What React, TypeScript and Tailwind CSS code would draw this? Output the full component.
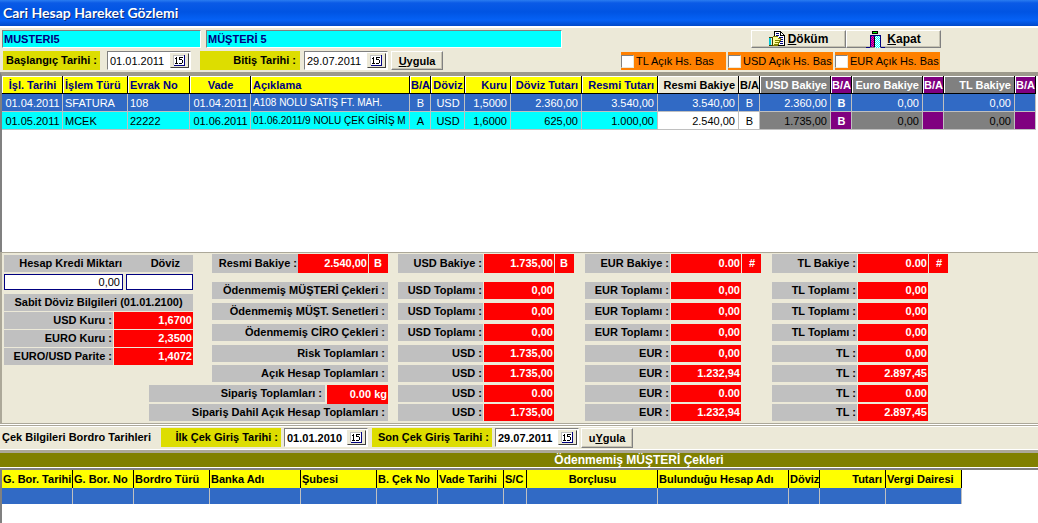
import { useState } from "react";
import clsx from "clsx";

type Align = "left" | "center" | "right";

interface Column {
  title: string;
  width: number;
  align: Align;
  head?: string;
  cell?: string;
}

const YELLOW = "bg-[#ffff00] text-[#000080]";
const PLAIN = "bg-[#ece9d8] text-black";
const GRAY = "bg-[#808080] text-white";
const PURPLE = "bg-[#800080] text-white";

const movementColumns: Column[] = [
  { title: "İşl. Tarihi", width: 61, align: "center", head: YELLOW },
  { title: "İşlem Türü", width: 65, align: "left", head: YELLOW },
  { title: "Evrak No", width: 62, align: "left", head: YELLOW },
  { title: "Vade", width: 61, align: "center", head: YELLOW },
  { title: "Açıklama", width: 159, align: "left", head: YELLOW, cell: "text-[10px]" },
  { title: "B/A", width: 21, align: "center", head: YELLOW },
  { title: "Döviz", width: 34, align: "center", head: YELLOW },
  { title: "Kuru", width: 46, align: "right", head: YELLOW },
  { title: "Döviz Tutarı", width: 71, align: "right", head: YELLOW },
  { title: "Resmi Tutarı", width: 76, align: "right", head: YELLOW },
  { title: "Resmi Bakiye", width: 81, align: "right", head: PLAIN, cell: "bg-white" },
  { title: "B/A", width: 21, align: "center", head: PLAIN, cell: "bg-white" },
  { title: "USD Bakiye", width: 71, align: "right", head: GRAY, cell: "bg-[#808080]" },
  { title: "B/A", width: 21, align: "center", head: PURPLE, cell: "bg-[#800080] text-white font-bold" },
  { title: "Euro Bakiye", width: 71, align: "right", head: GRAY, cell: "bg-[#808080]" },
  { title: "B/A", width: 21, align: "center", head: PURPLE, cell: "bg-[#800080] text-white font-bold" },
  { title: "TL Bakiye", width: 71, align: "right", head: GRAY, cell: "bg-[#808080]" },
  { title: "B/A", width: 21, align: "center", head: PURPLE, cell: "bg-[#800080] text-white font-bold" },
];

const movements = [
  ["01.04.2011", "SFATURA", "108", "01.04.2011", "A108 NOLU SATIŞ FT. MAH.", "B", "USD", "1,5000", "2.360,00", "3.540,00", "3.540,00", "B", "2.360,00", "B", "0,00", "", "0,00", ""],
  ["01.05.2011", "MCEK", "22222", "01.06.2011", "01.06.2011/9 NOLU ÇEK GİRİŞ M", "A", "USD", "1,6000", "625,00", "1.000,00", "2.540,00", "B", "1.735,00", "B", "0,00", "", "0,00", ""],
];

const chequeColumns: Column[] = [
  { title: "G. Bor. Tarihi", width: 71, align: "left" },
  { title: "G. Bor. No", width: 61, align: "left" },
  { title: "Bordro Türü", width: 76, align: "left" },
  { title: "Banka Adı", width: 91, align: "left" },
  { title: "Şubesi", width: 76, align: "left" },
  { title: "B. Çek No", width: 61, align: "left" },
  { title: "Vade Tarihi", width: 66, align: "left" },
  { title: "S/C", width: 23, align: "left" },
  { title: "Borçlusu", width: 131, align: "center" },
  { title: "Bulunduğu Hesap Adı", width: 131, align: "left" },
  { title: "Döviz", width: 31, align: "left" },
  { title: "Tutarı", width: 66, align: "right" },
  { title: "Vergi Dairesi", width: 76, align: "left" },
];

const totals = [
  { label: "Ödenmemiş MÜŞTERİ Çekleri :", suffix: " Toplamı :", values: ["0,00", "0,00", "0,00"] },
  { label: "Ödenmemiş MÜŞT. Senetleri :", suffix: " Toplamı :", values: ["0,00", "0,00", "0,00"] },
  { label: "Ödenmemiş CİRO Çekleri :", suffix: " Toplamı :", values: ["0,00", "0,00", "0,00"] },
  { label: "Risk Toplamları :", suffix: " :", values: ["1.735,00", "0,00", "0,00"] },
  { label: "Açık Hesap Toplamları :", suffix: " :", values: ["1.735,00", "1.232,94", "2.897,45"] },
];

const currencies = ["USD", "EUR", "TL"];

const alignClass: Record<Align, string> = {
  left: "text-left",
  center: "text-center",
  right: "text-right",
};

const sunken = "border border-t-[#808080] border-l-[#808080] border-r-white border-b-white";
const raised =
  "border border-t-white border-l-white border-r-[#808080] border-b-[#808080] bg-[#ece9d8] shadow-[inset_-1px_-1px_0_#c5c2b2]";

function DateField({ id, value, bold }: { id: string; value: string; bold?: boolean }) {
  const [date, setDate] = useState(value);
  return (
    <div className={clsx("flex h-[19px] w-[84px] items-center bg-white", sunken)}>
      <input
        id={id}
        value={date}
        onChange={(e) => setDate(e.target.value)}
        className={clsx("h-full w-[62px] pl-[2px] outline-none", bold && "font-bold")}
      />
      <button
        type="button"
        aria-label="Takvim"
        className="flex h-[15px] w-[19px] items-center justify-center border border-t-[#ece9d8] border-l-[#ece9d8] border-r-[#404040] border-b-[#404040] bg-[#ece9d8]"
      >
        <svg viewBox="0 0 13 11" className="h-[11px] w-[13px]" shapeRendering="crispEdges">
          <path d="M0 0h11v10H0z" fill="#fff" />
          <path d="M0 0h11v1H0zM0 0h1v10H0z" fill="#c0c0c0" />
          <path d="M11 0h1v11h-1zM1 10h10v1H1z" fill="#000080" />
          <path d="M3 2h1v6H3zM2 3h1v1H2zM2 8h3v1H2z" fill="#000" />
          <path d="M6 2h4v1H6zM6 3h1v2H6zM6 4h3v1H6zM9 5h1v3H9zM6 8h3v1H6z" fill="#000" />
        </svg>
      </button>
    </div>
  );
}

function PrintIcon() {
  return (
    <svg viewBox="0 0 17 16" className="h-4 w-[17px]" shapeRendering="crispEdges">
      <path d="M6 1h6l4 4v9H6z" fill="#fff" />
      <path d="M5.5 5V.5h6l4 4v10H7M11.5 .5v4h4" fill="none" stroke="#000" />
      <path d="M7 2.5h3M7 4.5h3M10 6.5h4M12 8.5h2M11 10.5h3M11 12.5h3" fill="none" stroke="#000080" />
      <path d="M3 6h6v2h2v2h-1v2H9v2H4v-1H3z" fill="#ffff99" />
      <path d="M4 5.5h5M9 7.500h2.500v2H6M10 9.500v2H6M9 11.500v2H5M4 14.500h5" fill="none" stroke="#808000" />
      <path d="M0 7h2v7H0z" fill="#00c8d8" />
      <path d="M0 6.500h3v8H0" fill="none" stroke="#404000" />
    </svg>
  );
}

function ExitIcon() {
  return (
    <svg viewBox="0 0 19 17" className="h-[17px] w-[19px]" shapeRendering="crispEdges">
      <defs>
        <pattern id="magentaDither" width="2" height="2" patternUnits="userSpaceOnUse">
          <rect width="2" height="2" fill="#ff00c0" />
          <path d="M0 0h1v1H0zM1 1h1v1H1z" fill="#800080" />
        </pattern>
        <pattern id="cyanDither" width="2" height="2" patternUnits="userSpaceOnUse">
          <rect width="2" height="2" fill="#fff" />
          <path d="M0 0h1v1H0zM1 1h1v1H1z" fill="#00ffff" />
        </pattern>
      </defs>
      <path d="M6 0h6v3H6z" fill="#000" />
      <path d="M7 1h4v1H7z" fill="#00ff00" />
      <path d="M4 4h11v13h4v-1H0v1h4z" fill="#000080" />
      <path d="M5 5h3v11H5z" fill="url(#magentaDither)" />
      <path d="M8 6h1v10H8z" fill="#000" />
      <path d="M9 5h5v12H9z" fill="url(#cyanDither)" />
    </svg>
  );
}

function PrintOption({ label }: { label: string }) {
  return (
    <label className="flex h-[18px] w-[105px] items-center gap-[2px] bg-[#ff8000] whitespace-nowrap">
      <input
        type="checkbox"
        className="size-[13px] shrink-0 appearance-none border border-t-[#808080] border-l-[#808080] border-r-[#ece9d8] border-b-[#ece9d8] bg-white checked:bg-[#000080]"
      />
      {label}
    </label>
  );
}

function GrayLabel({ children, className }: { children: React.ReactNode; className?: string }) {
  return <div className={clsx("shrink-0 bg-[#c0c0c0] text-right whitespace-nowrap", className)}>{children}</div>;
}

function RedValue({ children, className }: { children: React.ReactNode; className?: string }) {
  return <div className={clsx("shrink-0 bg-[#ff0000] text-right whitespace-nowrap text-white", className)}>{children}</div>;
}

function CurrencyCells({ suffix, values, flags }: { suffix: string; values: string[]; flags?: string[] }) {
  return (
    <>
      {currencies.map((cur, i) => (
        <div key={cur} className={clsx("flex w-[177px] shrink-0", flags ? "h-[19px] leading-[19px]" : "h-[17px] leading-[17px]")}>
          <GrayLabel className="mr-px w-[85px] pr-px">{cur + suffix}</GrayLabel>
          <RedValue className="w-[70px] pr-px">{values[i]}</RedValue>
          {flags && <RedValue className="ml-px w-[19px] pr-[6px]">{flags[i]}</RedValue>}
        </div>
      ))}
    </>
  );
}

function MovementTable() {
  const [selected, setSelected] = useState(0);
  return (
    <table className="w-[1034px] table-fixed border-collapse">
      <colgroup>
        {movementColumns.map((c, i) => (
          <col key={i} style={{ width: c.width }} />
        ))}
      </colgroup>
      <thead>
        <tr className="h-[18px]">
          {movementColumns.map((c, i) => (
            <th
              key={i}
              className={clsx(
                "p-0 leading-4 whitespace-nowrap shadow-[inset_-1px_-1px_0_#000,inset_1px_1px_0_#fff]",
                c.head,
                alignClass[c.align],
                c.align === "left" && "pl-[2px]",
                c.align === "right" && "pr-[4px]",
              )}
            >
              {c.title}
            </th>
          ))}
        </tr>
      </thead>
      <tbody>
        {movements.map((row, r) => (
          <tr
            key={r}
            onClick={() => setSelected(r)}
            className={clsx("h-[18px]", r === selected ? "bg-[#316ac5] text-white" : "bg-[#00ffff] text-black")}
          >
            {row.map((text, i) => {
              const c = movementColumns[i];
              return (
                <td
                  key={i}
                  className={clsx(
                    "p-0 leading-4 whitespace-nowrap shadow-[inset_-1px_-1px_0_#c0c0c0]",
                    alignClass[c.align],
                    c.align === "left" && "pl-[2px]",
                    c.align === "right" && "pr-[4px]",
                    (r !== selected || i === 4) && c.cell,
                    r === selected && c.head === PURPLE && "font-bold",
                  )}
                >
                  {text}
                </td>
              );
            })}
          </tr>
        ))}
      </tbody>
    </table>
  );
}

function ChequeTable() {
  return (
    <table className="w-[960px] table-fixed border-collapse">
      <colgroup>
        {chequeColumns.map((c) => (
          <col key={c.title} style={{ width: c.width }} />
        ))}
      </colgroup>
      <thead>
        <tr className="h-[18px] bg-[#ffff00]">
          {chequeColumns.map((c) => (
            <th
              key={c.title}
              className={clsx(
                "p-0 leading-[18px] whitespace-nowrap shadow-[inset_-1px_0_0_#000]",
                alignClass[c.align],
                c.align === "left" && "pl-px",
                c.align === "right" && "pr-[4px]",
              )}
            >
              {c.title}
            </th>
          ))}
        </tr>
      </thead>
      <tbody>
        <tr className="h-4 bg-[#316ac5]">
          {chequeColumns.map((c) => (
            <td key={c.title} className="p-0 shadow-[inset_-1px_0_0_#c0c0c0]" />
          ))}
        </tr>
      </tbody>
    </table>
  );
}

export default function App() {
  return (
    <div className="flex min-h-screen flex-col overflow-x-hidden bg-white font-['Liberation_Sans',Arial,sans-serif] text-[11px] text-black">
      <header className="flex h-[26px] items-center bg-[linear-gradient(to_bottom,#2a7cf0_0,#0a5ae6_3px,#0054e3_12px,#0561f5_20px,#0048c8_26px)] pl-[3px]">
        <h1 className="font-['Lato',sans-serif] text-sm leading-5 font-bold text-white [text-shadow:1px_1px_0_#0a2a7a]">
          Cari Hesap Hareket Gözlemi
        </h1>
      </header>

      <section className="flex items-start border-t-2 border-white bg-[#ece9d8] py-[2px] pl-[2px]">
        <div className="flex w-[560px] shrink-0 flex-col gap-[3px]">
          <div className="flex gap-[5px] font-bold text-[#000080]">
            <input aria-label="Cari kodu" defaultValue="MUSTERI5" className={clsx("h-[18px] w-[199px] bg-[#00ffff] px-px outline-none", sunken)} />
            <input aria-label="Cari adı" defaultValue="MÜŞTERİ 5" className={clsx("h-[18px] w-[356px] bg-[#00ffff] px-px outline-none", sunken)} />
          </div>
          <div className="flex items-start">
            <label htmlFor="start" className="ml-px h-[19px] w-[97px] bg-[#dddd00] text-center leading-[19px] font-bold">
              Başlangıç Tarihi :
            </label>
            <div className="ml-[7px]">
              <DateField id="start" value="01.01.2011" />
            </div>
            <label htmlFor="end" className="ml-[9px] h-[19px] w-[100px] bg-[#dddd00] pr-1 text-right leading-[19px] font-bold">
              Bitiş Tarihi :
            </label>
            <div className="ml-1">
              <DateField id="end" value="29.07.2011" />
            </div>
            <button type="button" className={clsx("ml-[3px] h-[19px] w-[52px] leading-4 font-bold", raised)}>
              <u>U</u>ygula
            </button>
          </div>
        </div>
        <div className="ml-[59px] flex w-80 shrink-0 flex-col items-end gap-1">
          <div className="flex">
            <button type="button" className={clsx("flex h-[18px] w-[95px] items-center justify-center gap-[2px] text-xs leading-4 font-bold", raised)}>
              <PrintIcon />
              <span><u>D</u>öküm</span>
            </button>
            <button type="button" className={clsx("flex h-[18px] w-[95px] items-center justify-center gap-[2px] text-xs leading-4 font-bold", raised)}>
              <ExitIcon />
              <span><u>K</u>apat</span>
            </button>
          </div>
          <div className="flex w-full gap-[2px]">
            <PrintOption label="TL Açık Hs. Bas" />
            <PrintOption label="USD Açık Hs. Bas" />
            <PrintOption label="EUR Açık Hs. Bas" />
          </div>
        </div>
      </section>

      <section className="min-h-[180px] border-t-4 border-l-2 border-t-[#9d9a8c] border-l-[#808080] bg-white">
        <MovementTable />
      </section>

      <section className="border-t border-b border-l-2 border-[#aca899] bg-[#ece9d8] pt-px pb-[2px] font-bold">
        <div className="flex items-start">
          <div className="mt-px ml-[2px] w-[189px] shrink-0 leading-[17px]">
            <div className="flex h-[17px] bg-[#c0c0c0]">
              <label htmlFor="credit" className="w-[121px] pr-[3px] text-right">Hesap Kredi Miktarı</label>
              <label htmlFor="creditCurrency" className="flex-1 pr-[13px] text-right">Döviz</label>
            </div>
            <div className="mt-[2px] flex justify-between">
              <input id="credit" defaultValue="0,00" className="h-4 w-[119px] border border-[#000080] bg-white pr-[2px] text-right font-normal outline-none" />
              <input id="creditCurrency" className="h-4 w-[67px] border border-[#000080] bg-white outline-none" />
            </div>
            <div className="mt-[4px] h-[17px] bg-[#c0c0c0] text-center">Sabit Döviz Bilgileri (01.01.2100)</div>
            {[
              ["USD Kuru :", "1,6700"],
              ["EURO Kuru :", "2,3500"],
              ["EURO/USD Parite :", "1,4072"],
            ].map(([label, value]) => (
              <div key={label} className="mt-px flex h-[17px] gap-px">
                <GrayLabel className="w-[109px] pr-px">{label}</GrayLabel>
                <RedValue className="w-[79px] pr-px">{value}</RedValue>
              </div>
            ))}
          </div>

          <div className="ml-[19px]">
            <div className="flex h-7 gap-[10px]">
              <div className="flex h-[19px] w-[176px] shrink-0 leading-[19px]">
                <GrayLabel className="w-[86px] pr-px">Resmi Bakiye :</GrayLabel>
                <RedValue className="w-[70px] pr-px">2.540,00</RedValue>
                <RedValue className="ml-px w-[19px] pr-[6px]">B</RedValue>
              </div>
              <CurrencyCells suffix=" Bakiye :" values={["1.735,00", "0.00", "0.00"]} flags={["B", "#", "#"]} />
            </div>
            {totals.map((row, i) => (
              <div key={row.label} className={clsx("flex gap-[10px]", i < 3 ? "h-[21px]" : "h-5")}>
                <GrayLabel className="h-[17px] w-[176px] pr-[3px] leading-[17px]">{row.label}</GrayLabel>
                <CurrencyCells suffix={row.suffix} values={row.values} />
              </div>
            ))}
          </div>
        </div>

        <div className="flex h-[19px] gap-[10px] pl-[147px]">
          <div className="flex w-[239px] shrink-0 justify-between">
            <GrayLabel className="h-[17px] w-[176px] pr-[3px] leading-[17px]">Sipariş Toplamları :</GrayLabel>
            <RedValue className="h-[19px] w-[61px] pr-px leading-[19px]">0.00 kg</RedValue>
          </div>
          <CurrencyCells suffix=" :" values={["0.00", "0.00", "0.00"]} />
        </div>
        <div className="flex h-[17px] gap-[10px] pl-[147px]">
          <GrayLabel className="w-[239px] pr-[3px] leading-[17px]">Sipariş Dahil Açık Hesap Toplamları :</GrayLabel>
          <CurrencyCells suffix=" :" values={["1.735,00", "1.232,94", "2.897,45"]} />
        </div>
      </section>

      <section className="border-t border-white bg-[#aca899] pt-px">
        <div className="flex items-start border-t border-b border-white bg-[#ece9d8] py-px pl-[2px] leading-[19px] font-bold">
          <span className="w-[159px] shrink-0 whitespace-nowrap">Çek Bilgileri Bordro Tarihleri</span>
          <label htmlFor="firstCheque" className="h-[19px] w-[120px] bg-[#dddd00] pr-[3px] text-right whitespace-nowrap">
            İlk Çek Giriş Tarihi :
          </label>
          <div className="ml-[3px]">
            <DateField id="firstCheque" value="01.01.2010" bold />
          </div>
          <label htmlFor="lastCheque" className="ml-[4px] h-[19px] w-[120px] bg-[#dddd00] pr-[3px] text-right whitespace-nowrap">
            Son Çek Giriş Tarihi :
          </label>
          <div className="ml-[3px]">
            <DateField id="lastCheque" value="29.07.2011" bold />
          </div>
          <button type="button" className={clsx("ml-[2px] h-5 w-[52px] leading-4", raised)}>
            u<u>Y</u>gula
          </button>
        </div>
      </section>

      <section className="flex flex-1 flex-col">
        <h2 className="h-[18px] border-t-[3px] border-b border-t-[#aca899] border-b-white bg-[#808000] pl-60 text-center text-xs leading-[14px] font-bold text-white">
          Ödenmemiş MÜŞTERİ Çekleri
        </h2>
        <div className="flex-1 border-t-2 border-l-2 border-[#808080] bg-white">
          <ChequeTable />
        </div>
      </section>
    </div>
  );
}
